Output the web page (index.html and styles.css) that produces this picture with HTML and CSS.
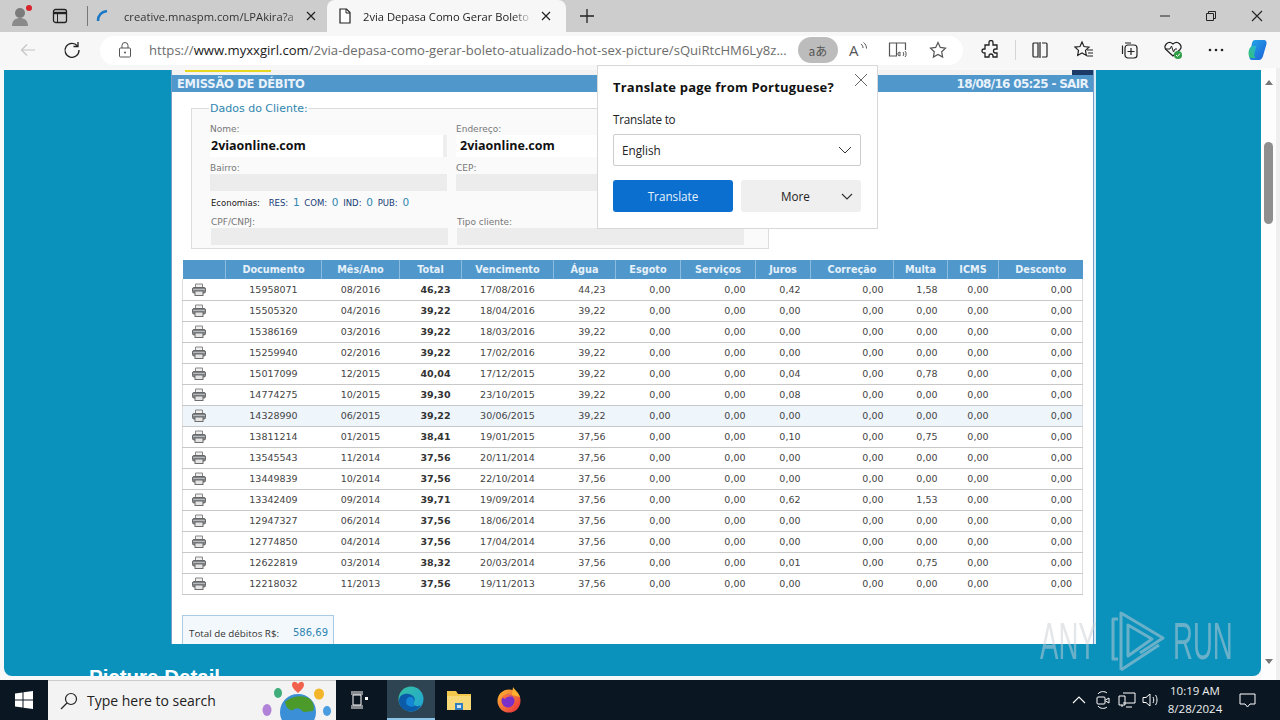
FILE: index.html
```html
<!DOCTYPE html>
<html lang="en">
<head>
<meta charset="utf-8">
<title>2via Depasa Como Gerar Boleto</title>
<link rel="stylesheet" href="styles.css">
</head>
<body>
<svg class="defs" width="0" height="0" aria-hidden="true">
  <symbol id="printer" viewBox="0 0 14 13">
    <path d="M3.500 5V1h7v4" fill="#efefef" stroke="#888"/>
    <rect x="0.500" y="4.500" width="13" height="5.500" rx="1.500" fill="#7f8589" stroke="#666"/>
    <rect x="3" y="8" width="8" height="4.500" fill="#e4e4e4" stroke="#6d6d6d"/>
    <path d="M1 6.500h12" stroke="#b5b9bc"/>
  </symbol>
</svg>

<header class="tabstrip">
  <div class="strip-left">
    <svg class="i profile" width="24" height="24" viewBox="0 0 24 24"><circle cx="10" cy="9" r="5" fill="#7b7b7b"/><path d="M2 22c0-6 4-8 8-8s8 2 8 8z" fill="#8a8a8a"/><circle cx="19" cy="4" r="3" fill="#d8232a"/></svg>
    <svg class="i actions" width="16" height="16" viewBox="0 0 16 16"><rect x="1.500" y="1.500" width="13" height="13" rx="2" fill="none" stroke="#222" stroke-width="1.300"/><path d="M1.500 5h13" stroke="#222" stroke-width="2.400"/><path d="M5.500 5v9" stroke="#222"/></svg>
    <span class="strip-div"></span>
  </div>
  <div class="tab">
    <svg class="i" width="14" height="14" viewBox="0 0 14 14"><path d="M2 12C2 7 5 3 11 2" fill="none" stroke="#1b78c4" stroke-width="2.600"/></svg>
    <span class="tab-title fade">creative.mnaspm.com/LPAkira?a</span>
    <svg class="i" width="10" height="10" viewBox="0 0 10 10"><path d="M1 1l8 8M9 1l-8 8" stroke="#222" stroke-width="1.200"/></svg>
  </div>
  <div class="tab active">
    <svg class="i" width="14" height="16" viewBox="0 0 14 16"><path d="M2 1h6.500L12 4.500V15H2z" fill="#fff" stroke="#222" stroke-width="1.200"/><path d="M8 1v4h4" fill="none" stroke="#222"/></svg>
    <span class="tab-title fade">2via Depasa Como Gerar Boleto /</span>
    <svg class="i" width="10" height="10" viewBox="0 0 10 10"><path d="M1 1l8 8M9 1l-8 8" stroke="#222" stroke-width="1.200"/></svg>
  </div>
  <svg class="i newtab" width="16" height="16" viewBox="0 0 16 16"><path d="M8 1v14M1 8h14" stroke="#222" stroke-width="1.300"/></svg>
  <div class="winctl">
    <svg class="i" width="12" height="12" viewBox="0 0 12 12"><path d="M1 6h10" stroke="#222"/></svg>
    <svg class="i" width="12" height="12" viewBox="0 0 12 12"><path d="M1.500 3.500h7v7h-7zM3.500 3V1.500h7v7H9" fill="none" stroke="#222"/></svg>
    <svg class="i" width="12" height="12" viewBox="0 0 12 12"><path d="M1 1l10 10M11 1L1 11" stroke="#222" stroke-width="1.100"/></svg>
  </div>
</header>

<nav class="toolbar">
  <svg class="i back" width="16" height="16" viewBox="0 0 16 16"><path d="M15 8H1.500M7 2.500L1.500 8 7 13.500" fill="none" stroke="#c4c4c4" stroke-width="1.200"/></svg>
  <svg class="i reload" width="18" height="18" viewBox="0 0 18 18"><path d="M14.500 5A7 7 0 1 0 16 9" fill="none" stroke="#222" stroke-width="1.300"/><path d="M15 1v4.500h-4.500" fill="none" stroke="#222" stroke-width="1.300"/></svg>
  <div class="omnibox">
    <svg class="i lock" width="14" height="16" viewBox="0 0 14 16"><rect x="1.500" y="6" width="11" height="9" rx="1" fill="none" stroke="#555"/><path d="M4 6V3.500a3 3 0 0 1 6 0V6" fill="none" stroke="#555"/><circle cx="7" cy="10.500" r="1" fill="#555"/></svg>
    <span class="url">https://<b>www.myxxgirl.com</b>/2via-depasa-como-gerar-boleto-atualizado-hot-sex-picture/sQuiRtcHM6Ly8z...</span>
    <span class="translate-pill">aあ</span>
    <svg class="i omni-a" width="20" height="18" viewBox="0 0 20 18"><text x="1" y="15" class="read-a">A</text><path d="M13 3c1.500 1 2 2.500 2 4M15.500 1.500c2 1.500 3 3.500 3 6" fill="none" stroke="#555"/></svg>
    <svg class="i omni-b" width="20" height="18" viewBox="0 0 20 18"><path d="M1.500 2h7v13h-7zM8.500 2h9v7" fill="none" stroke="#555" stroke-width="1.200"/><path d="M12 11v4l-2-1v-2zM15 11c1 1 1 3 0 4M17 10c1.500 1.500 1.500 4.500 0 6" fill="none" stroke="#555"/></svg>
    <svg class="i omni-c" width="18" height="18" viewBox="0 0 18 18"><path d="M9 1.500l2.300 4.900 5.200.7-3.800 3.700.9 5.300L9 13.500l-4.600 2.600.9-5.300L1.500 7.100l5.200-.7z" fill="none" stroke="#555" stroke-width="1.200"/></svg>
  </div>
  <div class="tools">
    <svg class="i" width="20" height="20" viewBox="0 0 20 20"><path d="M8 2.500a2 2 0 0 1 4 0V5h4v4h-1.500a2 2 0 0 0 0 4H16v4h-4v-1a2 2 0 0 0-4 0v1H4v-4H3a2 2 0 0 1 0-4h1V5h4z" fill="none" stroke="#222" stroke-width="1.300"/></svg>
    <span class="tool-div"></span>
    <svg class="i" width="18" height="18" viewBox="0 0 18 18"><path d="M7 2H3a1 1 0 0 0-1 1v12a1 1 0 0 0 1 1h4zM9 1v16M11 2h4a1 1 0 0 1 1 1v12a1 1 0 0 1-1 1h-4" fill="none" stroke="#222" stroke-width="1.200"/></svg>
    <svg class="i" width="20" height="20" viewBox="0 0 20 20"><path d="M8 2l2 4.500 5 .6-3.500 3.300.8 5L8 13l-4.300 2.400.8-5L1 7.100l5-.6z" fill="none" stroke="#222" stroke-width="1.200"/><path d="M13 10h6M14 13h5M13 16h6" stroke="#222" stroke-width="1.200"/></svg>
    <svg class="i" width="20" height="20" viewBox="0 0 20 20"><path d="M6 3h6M3.500 5.500V14" fill="none" stroke="#222" stroke-width="1.200"/><rect x="6" y="5" width="12" height="13" rx="3" fill="#f7f7f7" stroke="#222" stroke-width="1.200"/><path d="M12 8v7M8.500 11.500h7" stroke="#222" stroke-width="1.200"/></svg>
    <svg class="i" width="20" height="20" viewBox="0 0 20 20"><path d="M10 16L3 9.500C0 6 5-.5 10 4c5-4.500 10 2 7 5.500z" fill="none" stroke="#222" stroke-width="1.200"/><path d="M2 9h5l1.500-3 2 6 1.500-3h2" fill="none" stroke="#222"/><circle cx="15" cy="15" r="4" fill="#2f9e44"/><path d="M13 15l1.500 1.500 2.500-3" fill="none" stroke="#fff"/></svg>
    <svg class="i" width="16" height="4" viewBox="0 0 16 4"><circle cx="2" cy="2" r="1.300" fill="#222"/><circle cx="8" cy="2" r="1.300" fill="#222"/><circle cx="14" cy="2" r="1.300" fill="#222"/></svg>
    <svg class="i" width="24" height="24" viewBox="0 0 24 24"><defs><linearGradient id="cp1" x1="0" y1="0" x2="1" y2="1"><stop offset="0" stop-color="#23a8e8"/><stop offset="1" stop-color="#1c5fd8"/></linearGradient><linearGradient id="cp2" x1="0" y1="1" x2="1" y2="0"><stop offset="0" stop-color="#35c26d"/><stop offset="1" stop-color="#27b4d8"/></linearGradient></defs><path d="M9 2h9c2 0 3 2 2.500 4L17 18c-.5 2-2 4-4 4H6c-2 0-3-2-2.500-4L6 5c.4-1.800 1.500-3 3-3z" fill="url(#cp1)"/><path d="M3 12c-1 4-.5 8 3 8h4c-2-1-2-3-1.500-5l2-7H7c-2 0-3.300 2-4 4z" fill="url(#cp2)"/></svg>
  </div>
</nav>

<main class="viewport">
  <div class="page">
    <div class="teal">
      <section class="sheet">
        <div class="sheet-top"><span class="yellow"></span><span class="darkblock"></span></div>
        <div class="sheet-bar"><span class="bar-title">EMISSÃO DE DÉBITO</span><span class="bar-date">18/08/16 05:25 - SAIR</span></div>
        <fieldset class="client">
          <legend>Dados do Cliente:</legend>
          <div class="client-grid upper">
            <div class="field"><label>Nome:</label><div class="val">2viaonline.com</div></div>
            <div class="field"><label>Endereço:</label><div class="val val-b">2viaonline.com</div></div>
            <div class="field"><label>Bairro:</label><div class="empty"></div></div>
            <div class="field"><label>CEP:</label><div class="empty"></div></div>
          </div>
          <p class="econ">Economias: <span class="gap"></span><b>RES:</b> <i>1</i> <b>COM:</b> <i>0</i> <b>IND:</b> <i>0</i> <b>PUB:</b> <i>0</i></p>
          <div class="client-grid lower">
            <div class="field"><label>CPF/CNPJ:</label><div class="empty"></div></div>
            <div class="field"><label>Tipo cliente:</label><div class="empty"></div></div>
          </div>
        </fieldset>

        <table class="debts">
          <colgroup><col class="c0"><col class="c1"><col class="c2"><col class="c3"><col class="c4"><col class="c5"><col class="c6"><col class="c7"><col class="c8"><col class="c9"><col class="c10"><col class="c11"><col class="c12"></colgroup>
          <thead><tr><th></th><th>Documento</th><th>Mês/Ano</th><th>Total</th><th>Vencimento</th><th>Água</th><th>Esgoto</th><th>Serviços</th><th>Juros</th><th>Correção</th><th>Multa</th><th>ICMS</th><th>Desconto</th></tr></thead>
          <tbody>
            <tr><td class="p"><svg class="pr"><use href="#printer"/></svg></td><td class="m">15958071</td><td class="m">08/2016</td><td class="t">46,23</td><td class="m">17/08/2016</td><td>44,23</td><td>0,00</td><td>0,00</td><td>0,42</td><td>0,00</td><td>1,58</td><td>0,00</td><td>0,00</td></tr>
            <tr><td class="p"><svg class="pr"><use href="#printer"/></svg></td><td class="m">15505320</td><td class="m">04/2016</td><td class="t">39,22</td><td class="m">18/04/2016</td><td>39,22</td><td>0,00</td><td>0,00</td><td>0,00</td><td>0,00</td><td>0,00</td><td>0,00</td><td>0,00</td></tr>
            <tr><td class="p"><svg class="pr"><use href="#printer"/></svg></td><td class="m">15386169</td><td class="m">03/2016</td><td class="t">39,22</td><td class="m">18/03/2016</td><td>39,22</td><td>0,00</td><td>0,00</td><td>0,00</td><td>0,00</td><td>0,00</td><td>0,00</td><td>0,00</td></tr>
            <tr><td class="p"><svg class="pr"><use href="#printer"/></svg></td><td class="m">15259940</td><td class="m">02/2016</td><td class="t">39,22</td><td class="m">17/02/2016</td><td>39,22</td><td>0,00</td><td>0,00</td><td>0,00</td><td>0,00</td><td>0,00</td><td>0,00</td><td>0,00</td></tr>
            <tr><td class="p"><svg class="pr"><use href="#printer"/></svg></td><td class="m">15017099</td><td class="m">12/2015</td><td class="t">40,04</td><td class="m">17/12/2015</td><td>39,22</td><td>0,00</td><td>0,00</td><td>0,04</td><td>0,00</td><td>0,78</td><td>0,00</td><td>0,00</td></tr>
            <tr><td class="p"><svg class="pr"><use href="#printer"/></svg></td><td class="m">14774275</td><td class="m">10/2015</td><td class="t">39,30</td><td class="m">23/10/2015</td><td>39,22</td><td>0,00</td><td>0,00</td><td>0,08</td><td>0,00</td><td>0,00</td><td>0,00</td><td>0,00</td></tr>
            <tr class="hl"><td class="p"><svg class="pr"><use href="#printer"/></svg></td><td class="m">14328990</td><td class="m">06/2015</td><td class="t">39,22</td><td class="m">30/06/2015</td><td>39,22</td><td>0,00</td><td>0,00</td><td>0,00</td><td>0,00</td><td>0,00</td><td>0,00</td><td>0,00</td></tr>
            <tr><td class="p"><svg class="pr"><use href="#printer"/></svg></td><td class="m">13811214</td><td class="m">01/2015</td><td class="t">38,41</td><td class="m">19/01/2015</td><td>37,56</td><td>0,00</td><td>0,00</td><td>0,10</td><td>0,00</td><td>0,75</td><td>0,00</td><td>0,00</td></tr>
            <tr><td class="p"><svg class="pr"><use href="#printer"/></svg></td><td class="m">13545543</td><td class="m">11/2014</td><td class="t">37,56</td><td class="m">20/11/2014</td><td>37,56</td><td>0,00</td><td>0,00</td><td>0,00</td><td>0,00</td><td>0,00</td><td>0,00</td><td>0,00</td></tr>
            <tr><td class="p"><svg class="pr"><use href="#printer"/></svg></td><td class="m">13449839</td><td class="m">10/2014</td><td class="t">37,56</td><td class="m">22/10/2014</td><td>37,56</td><td>0,00</td><td>0,00</td><td>0,00</td><td>0,00</td><td>0,00</td><td>0,00</td><td>0,00</td></tr>
            <tr><td class="p"><svg class="pr"><use href="#printer"/></svg></td><td class="m">13342409</td><td class="m">09/2014</td><td class="t">39,71</td><td class="m">19/09/2014</td><td>37,56</td><td>0,00</td><td>0,00</td><td>0,62</td><td>0,00</td><td>1,53</td><td>0,00</td><td>0,00</td></tr>
            <tr><td class="p"><svg class="pr"><use href="#printer"/></svg></td><td class="m">12947327</td><td class="m">06/2014</td><td class="t">37,56</td><td class="m">18/06/2014</td><td>37,56</td><td>0,00</td><td>0,00</td><td>0,00</td><td>0,00</td><td>0,00</td><td>0,00</td><td>0,00</td></tr>
            <tr><td class="p"><svg class="pr"><use href="#printer"/></svg></td><td class="m">12774850</td><td class="m">04/2014</td><td class="t">37,56</td><td class="m">17/04/2014</td><td>37,56</td><td>0,00</td><td>0,00</td><td>0,00</td><td>0,00</td><td>0,00</td><td>0,00</td><td>0,00</td></tr>
            <tr><td class="p"><svg class="pr"><use href="#printer"/></svg></td><td class="m">12622819</td><td class="m">03/2014</td><td class="t">38,32</td><td class="m">20/03/2014</td><td>37,56</td><td>0,00</td><td>0,00</td><td>0,01</td><td>0,00</td><td>0,75</td><td>0,00</td><td>0,00</td></tr>
            <tr><td class="p"><svg class="pr"><use href="#printer"/></svg></td><td class="m">12218032</td><td class="m">11/2013</td><td class="t">37,56</td><td class="m">19/11/2013</td><td>37,56</td><td>0,00</td><td>0,00</td><td>0,00</td><td>0,00</td><td>0,00</td><td>0,00</td><td>0,00</td></tr>
          </tbody>
        </table>

        <div class="totals"><span>Total de débitos R$:</span><b>586,69</b></div>
      </section>
      <h2 class="picture">Picture Detail</h2>
    </div>
  </div>
  <aside class="scrollbar">
    <span class="arrow up"></span>
    <span class="thumb"></span>
    <span class="arrow down"></span>
  </aside>

  <div class="popup">
    <svg class="i popup-x" width="14" height="14" viewBox="0 0 14 14"><path d="M1 1l12 12M13 1L1 13" stroke="#666"/></svg>
    <h3>Translate page from Portuguese?</h3>
    <div class="to">Translate to</div>
    <div class="select"><span>English</span><svg class="i" width="14" height="8" viewBox="0 0 14 8"><path d="M1 1l6 6 6-6" fill="none" stroke="#333"/></svg></div>
    <div class="btns">
      <span class="btn primary">Translate</span>
      <span class="btn more"><span>More</span><svg class="i" width="12" height="7" viewBox="0 0 12 7"><path d="M1 1l5 5 5-5" fill="none" stroke="#333" stroke-width="1.200"/></svg></span>
    </div>
  </div>

  <div class="watermark">
    <span class="wm-any">ANY</span>
    <svg class="i" width="56" height="62" viewBox="0 0 56 62"><path d="M9 9H4V49H9M12 60V3L54 28 31 43M12 60L50 35M19 15V46L43 29z" fill="none" stroke="currentColor" stroke-width="3" stroke-linejoin="round"/></svg>
    <span class="wm-run">RUN</span>
  </div>
</main>

<footer class="taskbar">
  <svg class="i start" width="18" height="18" viewBox="0 0 18 18"><path d="M0 2.500L7.500 1.400V8.500H0zM8.500 1.300L18 0V8.500H8.500zM0 9.500H7.500V16.600L0 15.500zM8.500 9.500H18V18L8.500 16.700z" fill="#fff"/></svg>
  <div class="search">
    <svg class="i" width="18" height="18" viewBox="0 0 18 18"><circle cx="11" cy="7" r="5.500" fill="none" stroke="#222" stroke-width="1.200"/><path d="M7 11l-6 6" stroke="#222" stroke-width="1.300"/></svg>
    <span class="search-text">Type here to search</span>
    <svg class="i globe" width="74" height="40" viewBox="0 0 74 40">
      <circle cx="38" cy="32" r="18" fill="#3a8fd6"/>
      <path d="M25 22c6-6 18-8 25-3 3 3 5 8 3 12-5 0-8 2-11 0-2-4-7-3-9-1-3 1-7-2-8-8z" fill="#4c9a2a"/>
      <path d="M38 4c2-3 6-3 6 1 0 3-4 6-6 8-2-2-6-5-6-8 0-4 4-4 6-1z" fill="#f0624d"/>
      <ellipse cx="18" cy="13" rx="4" ry="5" fill="#3fae7a"/>
      <ellipse cx="59" cy="14" rx="5" ry="5.500" fill="#f3b52a"/>
      <ellipse cx="7" cy="30" rx="4.500" ry="6" fill="#b183d8"/>
      <ellipse cx="67" cy="31" rx="4" ry="5" fill="#4a9ce0"/>
    </svg>
  </div>
  <svg class="i taskview" width="18" height="18" viewBox="0 0 18 18"><path d="M1 1h12M1 17h12M1 15h12M3 4h8v10H3zM1 3h12" fill="none" stroke="#fff"/><rect x="15" y="6" width="3" height="3" fill="#fff"/></svg>
  <div class="edge-tile">
    <svg class="i" width="26" height="26" viewBox="0 0 26 26"><defs><linearGradient id="eg" x1="0" y1="0" x2="1" y2="1"><stop offset="0" stop-color="#35c1a1"/><stop offset="1" stop-color="#1fa3d8"/></linearGradient></defs><circle cx="13" cy="13" r="12.500" fill="url(#eg)"/><path d="M1 15C1 9 6 7 11 8c5 1 7 5 5 8-1 2-1 3 2 4 2 .5 4 0 5-1-2 4-6 6.500-10 6.500C7 25.500 1 21 1 15z" fill="#0c5ba8"/><path d="M8 16c0-4 3-6 6-5 2 1 2 3 2 5-1 2-1 3 1 4-5 2-9-1-9-4z" fill="#1386d6"/></svg>
  </div>
  <svg class="i folder" width="26" height="24" viewBox="0 0 26 24"><path d="M1 3h9l2 3h13v16H1z" fill="#f2c94c"/><path d="M1 8h24v14H1z" fill="#f7d977"/><rect x="9" y="15" width="8" height="7" fill="#2f7fc1"/><rect x="11" y="17" width="4" height="3" fill="#cfe3f5"/></svg>
  <svg class="i firefox" width="26" height="26" viewBox="0 0 26 26"><defs><linearGradient id="ff" x1="0" y1="0" x2="1" y2="1"><stop offset="0" stop-color="#ffbf2f"/><stop offset="1" stop-color="#e8263f"/></linearGradient></defs><circle cx="13" cy="14" r="11.500" fill="url(#ff)"/><path d="M17 0c2 3 6 6 7 10l-8-2z" fill="#ffb02e"/><circle cx="12" cy="14" r="6.500" fill="#7b2fc9"/><path d="M6 10c3-3 8-3 10 0-3-1-6 0-7 2z" fill="#ff6d3a"/></svg>
  <div class="tray">
    <svg class="i" width="14" height="8" viewBox="0 0 14 8"><path d="M1 7l6-6 6 6" fill="none" stroke="#fff" stroke-width="1.100"/></svg>
    <svg class="i" width="14" height="18" viewBox="0 0 14 18"><path d="M2 3C4 0 9 0 11 2M2 15c2 3 7 3 9 1" fill="none" stroke="#fff"/><rect x="1" y="6" width="8" height="7" rx="1" fill="none" stroke="#fff"/><path d="M9.500 9l3.500-2v5l-3.500-2" fill="none" stroke="#fff"/></svg>
    <svg class="i" width="18" height="16" viewBox="0 0 18 16"><path d="M5 1h12v10H5M1 4h6v9H1zM4 13v2M8 15h6" fill="none" stroke="#fff"/></svg>
    <svg class="i" width="18" height="16" viewBox="0 0 18 16"><path d="M1 5.500h3L8 2v12l-4-3.500H1zM11 5c1 2 1 4 0 6M13.500 3c2 3 2 7 0 10" fill="none" stroke="#fff"/></svg>
    <div class="clock"><span>10:19 AM</span><span>8/28/2024</span></div>
    <svg class="i notif" width="17" height="15" viewBox="0 0 17 15"><path d="M1 1h15v10h-5l-2.500 3L6 11H1z" fill="none" stroke="#fff"/></svg>
  </div>
</footer>
</body>
</html>
```

FILE: styles.css
```css
* { box-sizing: border-box; }
html, body { margin: 0; height: 100%; }
body {
  width: 1280px; height: 720px; overflow: hidden;
  display: flex; flex-direction: column;
  font-family: "Open Sans", "Noto Sans", sans-serif;
  color: #222; background: #fff;
}
.defs { position: absolute; }
.i { display: block; flex: none; }

/* tab strip */
.tabstrip { height: 32px; flex: none; background: #cdcdcd; display: flex; align-items: center; }
.strip-left { width: 88px; flex: none; display: flex; align-items: center; padding-left: 10px; }
.actions { margin-left: 18px; }
.strip-div { width: 1px; height: 20px; background: #777; margin-left: 19px; }
.tab { width: 239px; height: 32px; display: flex; align-items: center; padding: 0 11px 0 8px; font-size: 11.200px; color: #333; }
.tab-title { flex: 1; margin-left: 14px; overflow: hidden; white-space: nowrap; }
.tab.active { background: #f7f7f7; border-radius: 8px 8px 0 0; padding: 0 15px 0 11px; color: #222; }
.tab.active .tab-title { margin-left: 11px; margin-right: 8px; }
.fade { -webkit-mask-image: linear-gradient(90deg, #000 88%, transparent 100%); mask-image: linear-gradient(90deg, #000 88%, transparent 100%); }
.newtab { margin-left: 13px; }
.winctl { margin-left: auto; display: flex; gap: 34px; padding-right: 17px; }

/* toolbar */
.toolbar { height: 36px; flex: none; background: #f7f7f7; display: flex; align-items: center; padding-left: 20px; }
.reload { margin-left: 27px; }
.omnibox { width: 863px; height: 29px; margin-left: 19px; background: #fff; border-radius: 15px; display: flex; align-items: center; padding-left: 18px; flex: none; }
.url { width: 647px; margin-left: 17px; font-size: 13.100px; color: #6c6c6c; white-space: nowrap; overflow: hidden; flex: none; }
.url b { font-weight: 400; color: #1a1a1a; }
.translate-pill { width: 40px; height: 26px; margin-left: 2px; border-radius: 13px; background: #bcbcbc; color: #555; font: 12px "Noto Sans CJK JP", "Noto Sans", sans-serif; display: flex; align-items: center; justify-content: center; flex: none; }
.omni-a { margin-left: 10px; }
.omni-b { margin-left: 20px; }
.omni-c { margin-left: 21px; }
.read-a { font: 15px "Open Sans", sans-serif; fill: #555; }
.tools { display: flex; align-items: center; margin-left: 18px; }
.tools > :nth-child(2) { margin-left: 14px; }
.tools > :nth-child(3) { margin-left: 15px; }
.tools > :nth-child(4) { margin-left: 25px; }
.tools > :nth-child(5) { margin-left: 25px; }
.tools > :nth-child(6) { margin-left: 24px; }
.tools > :nth-child(7) { margin-left: 25px; }
.tools > :nth-child(8) { margin-left: 22px; }
.tool-div { width: 1px; height: 20px; background: #d5d5d5; flex: none; }

/* viewport */
.viewport { position: relative; height: 612px; flex: none; display: flex; background: #f3f3f3; }
.page { flex: 1; padding: 2px 0 4px 4px; background: #f8f8f8; display: flex; }
.teal { flex: 1; background: #0a91bc; border-radius: 0 0 8px 8px; overflow: hidden; padding-left: 167px; }
.scrollbar { width: 19px; flex: none; background: #fdfdfd; border-right: 4px solid #efefef; display: flex; flex-direction: column; align-items: center; padding: 12px 0 0; }
.thumb { width: 9px; height: 82px; border-radius: 5px; background: #8f8f8f; margin-top: 57px; }
.arrow { width: 0; height: 0; border-left: 4px solid transparent; border-right: 4px solid transparent; }
.arrow.up { border-bottom: 5px solid #777; }
.arrow.down { border-top: 5px solid #777; margin-top: 435px; }

/* sheet */
.sheet { width: 923px; height: 574px; background: #fff; border-left: 1px solid #7a9cc8; border-right: 1px solid #7a9cc8; box-shadow: 2px 0 0 #d6edf5; overflow: hidden; font-family: "DejaVu Sans", sans-serif; }
.sheet-top { height: 5px; background: #f2f2f2; display: flex; justify-content: space-between; padding-left: 13px; }
.yellow { width: 86px; height: 2px; background: #e6d820; }
.darkblock { width: 21px; height: 5px; background: #1c3a68; }
.sheet-bar { height: 17px; background: #5097cb; color: #e9f2fa; display: flex; justify-content: space-between; align-items: center; padding: 1px 5px 0 5px; font: 700 12px "DejaVu Sans", sans-serif; white-space: nowrap; }
.bar-title { font-size: 11.500px; letter-spacing: -.25px; }
.bar-date { letter-spacing: -.7px; }

.client { margin: 8px 0 0 19px; padding: 0 0 0 18px; width: 578px; height: 149px; border: 1px solid #dcdcdc; background: #fafafa; min-width: 0; }
.client legend { padding: 2px 1px 0; margin-left: -1px; font-size: 11px; color: #2f86b0; line-height: 14px; }
.upper { margin-top: 7px; }
.client-grid { display: grid; grid-template-columns: 237px 313px; column-gap: 9px; }
.field label { display: block; font-size: 9px; color: #777; line-height: 12px; }
.val { height: 22px; background: #fff; border-right: 4px solid #eee; font: 700 12.500px "Open Sans", sans-serif; color: #111; line-height: 22px; padding-left: 1px; margin-bottom: 5px; }
.val-b { padding-left: 4px; }
.empty { height: 17px; background: #ececec; }
.econ { margin: 5px 0 0 1px; font-size: 8.500px; line-height: 12px; color: #222; white-space: nowrap; }
.econ b { font-weight: 400; color: #163a78; }
.econ i { font-style: normal; font-size: 10.500px; color: #2f86b0; margin: 0 2px; }
.gap { display: inline-block; width: 6px; }
.lower { margin-top: 7px; padding-left: 1px; grid-template-columns: 237px 287px; }

.debts { margin: 11px 0 0 10px; width: 900px; table-layout: fixed; border-collapse: collapse; font-size: 9.500px; color: #444; }
.c0 { width: 43px; } .c1 { width: 96px; } .c2 { width: 78px; } .c3 { width: 62px; } .c4 { width: 92px; } .c5 { width: 62px; }
.c6 { width: 65px; } .c7 { width: 75px; } .c8 { width: 55px; } .c9 { width: 83px; } .c10 { width: 54px; } .c11 { width: 51px; } .c12 { width: 84px; }
.debts th { height: 19px; padding: 0; background: #5097cb; color: #e6f1f9; font-size: 9.700px; font-weight: 700; border-left: 1px solid #8bbcdf; text-align: center; }
.debts th:first-child { border-left: 0; }
.debts td { height: 21px; padding: 0 10px 0 0; text-align: right; border-bottom: 1px solid #c8c8c8; white-space: nowrap; }
.debts td:first-child { border-left: 1px solid #ddd; }
.debts td:last-child { border-right: 1px solid #ddd; }
.debts td.m { text-align: center; padding: 0; }
.debts td.t { font-weight: 700; padding-right: 11px; color: #333; }
.debts td.p { text-align: left; padding: 0 0 0 9px; }
.pr { display: block; width: 14px; height: 13px; }
.hl td { background: #eef5fb; }

.totals { margin: 20px 0 0 10px; width: 152px; height: 40px; border: 1px solid #a9cbe4; background: #f3f8fc; display: flex; justify-content: space-between; padding: 11px 5px 0 6px; font-size: 9.800px; color: #333; font-family: "Open Sans", sans-serif; }
.totals b { font-weight: 400; color: #2f86b0; font-size: 10px; font-family: "DejaVu Sans", sans-serif; }

.picture { margin: 21px 0 0 -82px; font: 700 20.500px "Liberation Sans", sans-serif; color: #fff; line-height: 24px; }

/* popup */
.popup { position: absolute; left: 597px; top: -3px; width: 281px; height: 164px; background: #fff; border: 1px solid #d8d8d8; padding: 12px 16px 0 15px; font-size: 11.700px; }
.popup h3 { margin: 0; font-size: 13px; font-weight: 700; line-height: 18px; color: #111; letter-spacing: .2px; white-space: nowrap; }
.popup-x { position: absolute; left: 256px; top: 7px; }
.to { margin-top: 15px; line-height: 16px; color: #222; letter-spacing: -.2px; }
.select { height: 32px; margin-top: 7px; border: 1px solid #ccc; border-radius: 2px; display: flex; align-items: center; justify-content: space-between; padding: 0 8px; }
.btns { display: flex; gap: 8px; margin-top: 14px; }
.btn { width: 120px; height: 32px; border-radius: 3px; display: flex; align-items: center; justify-content: center; }
.primary { background: #0b6fd0; color: #e6f1fb; }
.more { background: #efefef; color: #222; justify-content: space-between; padding: 0 8px 0 40px; }

/* watermark */
.watermark { position: absolute; left: 1040px; top: 542px; display: flex; align-items: center; opacity: .5; color: #c8d0d5; font: 400 52px/62px "Liberation Sans", sans-serif; pointer-events: none; }
.watermark svg { margin-left: 11px; }
.wm-any, .wm-run { display: block; width: 58px; transform: scaleX(.53); transform-origin: 0 50%; white-space: nowrap; }
.wm-run { margin-left: 8px; }

/* taskbar */
.taskbar { height: 40px; flex: none; background: #0a1722; display: flex; align-items: center; color: #fff; }
.start { margin-left: 15px; }
.search { width: 288px; height: 40px; margin-left: 15px; background: #f3f3f3; border-top: 1px solid #ccc; display: flex; align-items: center; padding-left: 12px; color: #222; }
.search-text { margin-left: 9px; font-size: 14px; }
.globe { margin-left: auto; margin-right: 2px; align-self: flex-end; }
.taskview { margin-left: 14px; }
.edge-tile { width: 48px; height: 40px; margin-left: 19px; background: #2f4452; border-bottom: 2px solid #8cc4e8; display: flex; align-items: center; justify-content: center; }
.folder { margin-left: 11px; }
.firefox { margin-left: 24px; }
.tray { margin-left: auto; display: flex; align-items: center; }
.tray > :nth-child(2) { margin-left: 10px; }
.tray > :nth-child(3) { margin-left: 8px; }
.tray > :nth-child(4) { margin-left: 6px; }
.clock { display: flex; flex-direction: column; align-items: center; font-size: 11.500px; line-height: 18px; margin-left: 6px; width: 58px; color: #eee; }
.notif { margin: 0 24px 0 15px; }
```
